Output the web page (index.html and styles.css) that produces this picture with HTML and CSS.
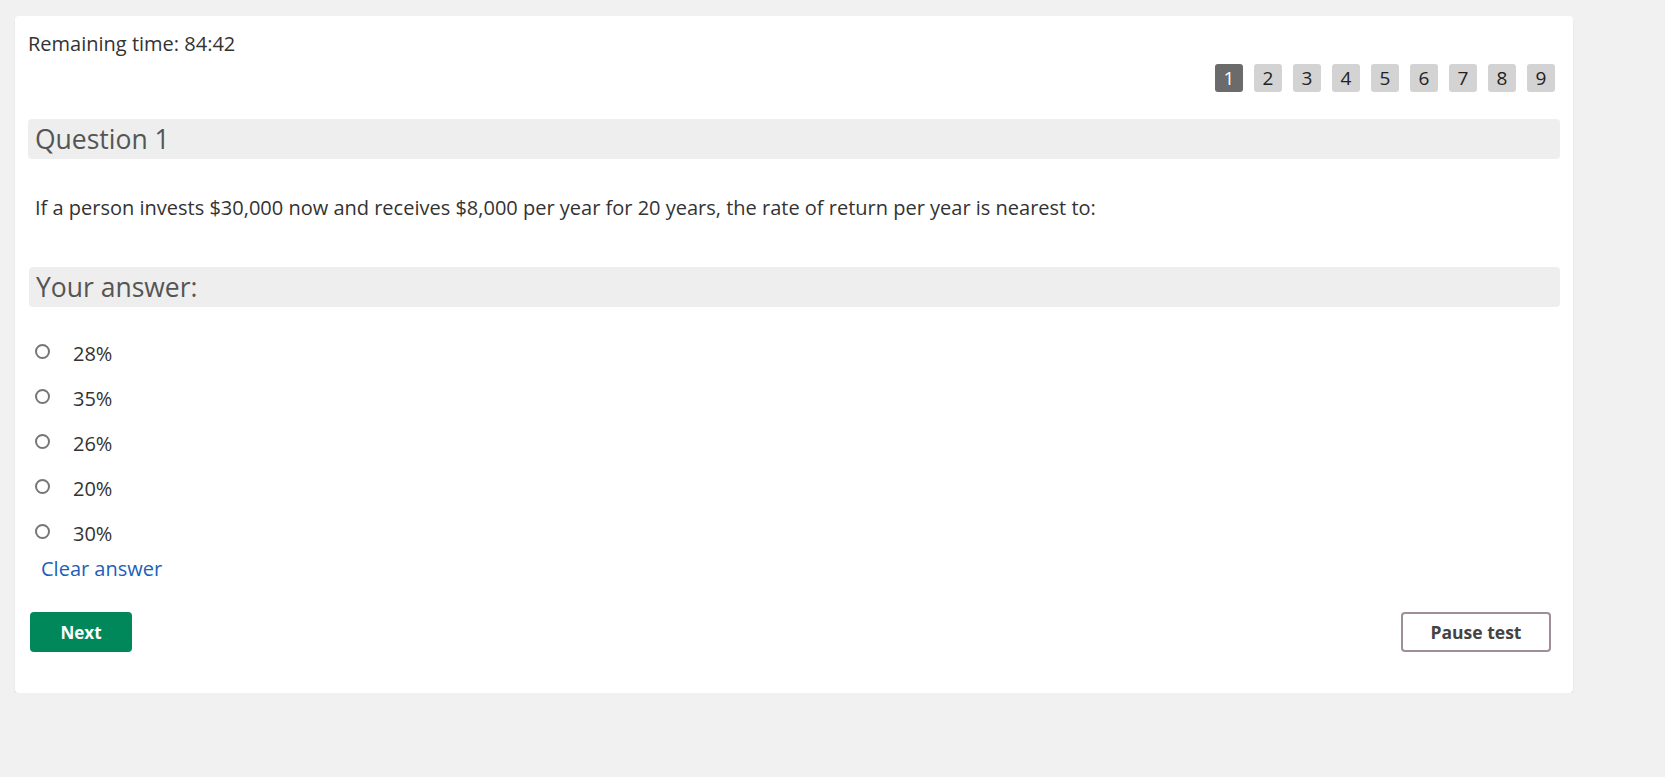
FILE: index.html
```html
<!DOCTYPE html>
<html lang="en">
<head>
<meta charset="utf-8">
<title>Test</title>
<link rel="stylesheet" href="styles.css">
</head>
<body>
<div class="card">
  <div class="timer">Remaining time: 84:42</div>
  <div class="pager">
    <span class="page active">1</span>
    <span class="page">2</span>
    <span class="page">3</span>
    <span class="page">4</span>
    <span class="page">5</span>
    <span class="page">6</span>
    <span class="page">7</span>
    <span class="page">8</span>
    <span class="page">9</span>
  </div>
  <h2 class="section-head">Question 1</h2>
  <p class="question">If a person invests $30,000 now and receives $8,000 per year for 20 years, the rate of return per year is nearest to:</p>
  <h2 class="section-head answer-head">Your answer:</h2>
  <ul class="options">
    <li class="option"><span class="radio"></span><span class="label">28%</span></li>
    <li class="option"><span class="radio"></span><span class="label">35%</span></li>
    <li class="option"><span class="radio"></span><span class="label">26%</span></li>
    <li class="option"><span class="radio"></span><span class="label">20%</span></li>
    <li class="option"><span class="radio"></span><span class="label">30%</span></li>
  </ul>
  <a class="clear" href="#">Clear answer</a>
  <div class="actions">
    <button class="btn-next">Next</button>
    <button class="btn-pause">Pause test</button>
  </div>
</div>
</body>
</html>
```

FILE: styles.css
```css
html, body {
  margin: 0;
  padding: 0;
}
body {
  background: #f1f1f1;
  font-family: "Open Sans", "Noto Sans", sans-serif;
  color: #333;
  padding: 16px 0 0 15px;
}
.card {
  width: 1532px;
  background: #fff;
  border-radius: 4px;
  box-shadow: 0 2px 2px rgba(0, 0, 0, 0.09);
  padding: 16px 13px 41px 13px;
}
.timer {
  font-size: 20px;
  line-height: 24px;
  color: #333;
}
.pager {
  display: flex;
  justify-content: flex-end;
  gap: 11px;
  margin-top: 8px;
  margin-right: 5px;
}
.page {
  width: 28px;
  height: 28px;
  border-radius: 3px;
  background: #d3d3d3;
  color: #222;
  font-size: 19px;
  line-height: 28px;
  text-align: center;
}
.page.active {
  background: #6b6b6b;
  color: #fff;
}
.section-head {
  margin: 27px 0 0 0;
  height: 40px;
  background: #eeeeee;
  border-radius: 4px;
  font-size: 26.5px;
  font-weight: 400;
  line-height: 40px;
  color: #555;
  padding-left: 7px;
}
.question {
  margin: 36px 0 0 7px;
  font-size: 20px;
  line-height: 26px;
  color: #333;
}
.answer-head {
  margin-top: 46px;
  margin-left: 1px;
  padding-left: 7px;
}
.options {
  list-style: none;
  margin: 24px 0 0 0;
  padding: 0;
}
.option {
  display: flex;
  align-items: center;
  height: 42px;
  margin-bottom: 3px;
}
.radio {
  width: 15px;
  height: 15px;
  box-sizing: border-box;
  border: 2px solid #767676;
  border-radius: 50%;
  margin-left: 7px;
  margin-top: -2px;
}
.label {
  margin-left: 23px;
  font-size: 20px;
  line-height: 26px;
  color: #333;
  padding-top: 3px;
}
.clear {
  display: inline-block;
  margin-left: 13px;
  font-size: 20px;
  line-height: 26px;
  color: #1c5fb8;
  text-decoration: none;
}
.actions {
  display: flex;
  justify-content: space-between;
  margin-top: 30px;
  padding: 0 9px 0 2px;
}
.btn-next {
  width: 102px;
  height: 40px;
  border: none;
  border-radius: 4px;
  background: #00885a;
  color: #fff;
  font-family: "Open Sans", "Noto Sans", sans-serif;
  font-size: 17px;
  font-weight: 700;
}
.btn-pause {
  width: 150px;
  height: 40px;
  border: 2px solid #9e8e99;
  border-radius: 4px;
  background: #fff;
  color: #444;
  font-family: "Open Sans", "Noto Sans", sans-serif;
  font-size: 17.5px;
  font-weight: 700;
}
```
